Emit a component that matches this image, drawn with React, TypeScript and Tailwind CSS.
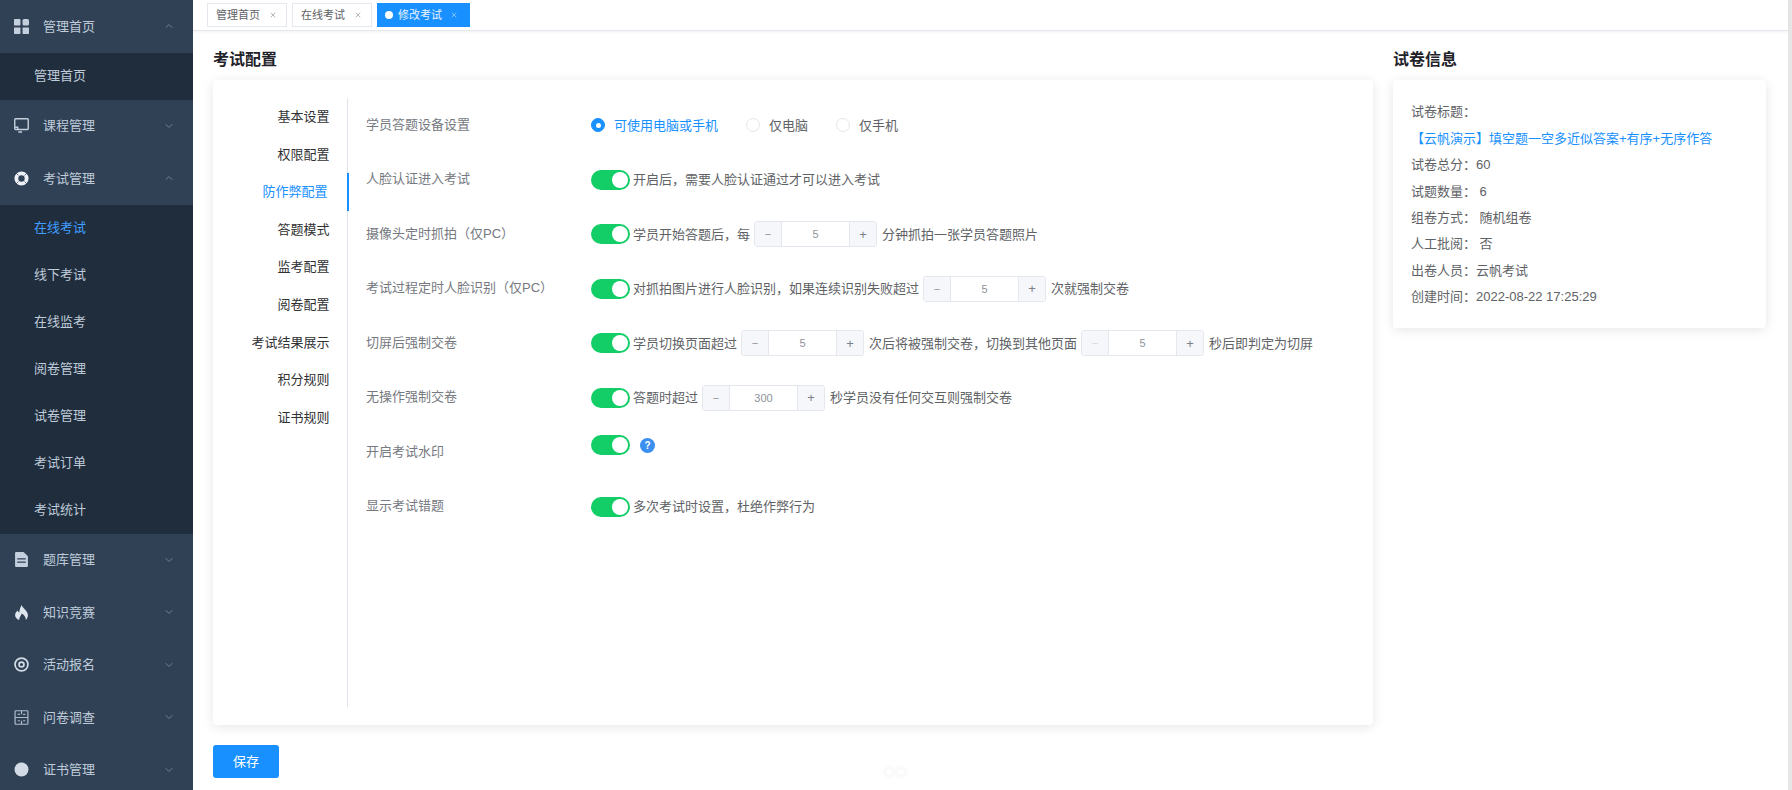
import { ChevronDown, ChevronUp, X } from "lucide-react";
import type { ReactNode } from "react";

const fontStack = "font-['Liberation_Sans','Noto_Sans_CJK_SC',sans-serif]";

function GridIcon() {
  return (
    <svg viewBox="0 0 14 14" className="h-[15px] w-[15px] fill-[#c3cfdc]">
      <rect x="0" y="0" width="6" height="6" rx="0.6" />
      <rect x="8" y="0" width="6" height="6" rx="1.4" />
      <rect x="0" y="8" width="6" height="6" rx="0.6" />
      <rect x="8" y="8" width="6" height="6" rx="0.6" />
    </svg>
  );
}

function MonitorIcon() {
  return (
    <svg viewBox="0 0 14 14" fill="none" className="h-[15px] w-[15px] stroke-[#c3cfdc]" strokeWidth="1.3">
      <rect x="0.7" y="0.7" width="12.6" height="10" rx="0.8" />
      <path d="M1 8.600h2.500v2M4 13h3.500" />
    </svg>
  );
}

function RingIcon() {
  return (
    <svg viewBox="0 0 14 14" fill="none" className="h-[15px] w-[15px] stroke-[#eef2f6]">
      <circle cx="7" cy="7" r="4.800" strokeWidth="3.600" />
      <path d="M2 2l2.200 2.200M12 2L9.800 4.200M2 12l2.200-2.200M12 12L9.800 9.800" stroke="#304156" strokeWidth="0.700" />
    </svg>
  );
}

function FileIcon() {
  return (
    <svg viewBox="0 0 14 14" className="h-[15px] w-[15px] fill-[#c3cfdc]">
      <path d="M1 1.200C1 .5 1.500 0 2.200 0H9l4 4v8.800c0 .7-.5 1.200-1.200 1.200H2.200C1.500 14 1 13.500 1 12.800z" />
      <path d="M3 6.500h8M3 9.500h8" stroke="#304156" strokeWidth="1.200" />
    </svg>
  );
}

function FlameIcon() {
  return (
    <svg viewBox="0 0 14 14" className="h-[15px] w-[15px] fill-[#dfe6ee]">
      <path d="M7.300 0c.5 2 1.600 2.800 2.700 3.900C11.500 5.300 13 7.300 13 9.600c0 1.700-.8 3.200-2 4.400.3-2.300-1.300-4.500-3.800-6C6.900 9.700 5 10.900 4.800 14 2.600 13.200 1 11.600 1 9.400c0-2 1.200-3.200 2.500-4.300.4 1 .8 1.500 1.500 1.900C5.200 4.400 5.800 2 7.300 0z" />
    </svg>
  );
}

function TargetIcon() {
  return (
    <svg viewBox="0 0 14 14" fill="none" className="h-[15px] w-[15px] stroke-[#d3dce6]">
      <circle cx="7" cy="7" r="6" strokeWidth="1.600" />
      <circle cx="7" cy="7" r="2.300" strokeWidth="1.600" />
    </svg>
  );
}

function FormIcon() {
  return (
    <svg viewBox="0 0 14 14" fill="none" className="h-[15px] w-[15px] stroke-[#aebccb]" strokeWidth="1.100">
      <rect x="1" y="0.700" width="12" height="12.600" rx="0.800" />
      <path d="M1 7h12M7 0.700V4M7 10v3.300M3.500 4h2M8.500 4h2M3.500 10h2M8.500 10h2" />
    </svg>
  );
}

function DotIcon() {
  return (
    <svg viewBox="0 0 14 14" className="h-[15px] w-[15px] fill-[#d3dce6]">
      <circle cx="7" cy="7" r="6.500" />
    </svg>
  );
}

const groups: { title: string; icon: ReactNode; open?: boolean; children?: string[] }[] = [
  { title: "管理首页", icon: <GridIcon />, open: true, children: ["管理首页"] },
  { title: "课程管理", icon: <MonitorIcon /> },
  {
    title: "考试管理",
    icon: <RingIcon />,
    open: true,
    children: ["在线考试", "线下考试", "在线监考", "阅卷管理", "试卷管理", "考试订单", "考试统计"],
  },
  { title: "题库管理", icon: <FileIcon /> },
  { title: "知识竞赛", icon: <FlameIcon /> },
  { title: "活动报名", icon: <TargetIcon /> },
  { title: "问卷调查", icon: <FormIcon /> },
  { title: "证书管理", icon: <DotIcon /> },
];

function Sidebar() {
  return (
    <aside className="h-full w-[193px] shrink-0 overflow-hidden bg-[#304156] text-[13px] text-[#bfcbd9]">
      {groups.map((g) => (
        <div key={g.title}>
          <div className="flex h-[52.5px] items-center pl-[14px] pr-[18px]">
            <span className="flex w-[29px] items-center">{g.icon}</span>
            <span className="flex-1">{g.title}</span>
            {g.open ? (
              <ChevronUp className="h-3 w-3 text-[#6f8196]" />
            ) : (
              <ChevronDown className="h-3 w-3 text-[#6f8196]" />
            )}
          </div>
          {g.children?.map((c) => (
            <div
              key={c}
              className={`flex h-[47px] items-center bg-[#1f2d3d] pl-[34px] ${c === "在线考试" ? "text-[#409eff]" : ""}`}
            >
              {c}
            </div>
          ))}
        </div>
      ))}
    </aside>
  );
}

function TabsBar() {
  return (
    <div className="flex h-[31px] shrink-0 items-start gap-[5px] border-b border-[#e4e7ed] pl-[14px] pt-[3px] text-[11px] shadow-[0_1px_3px_rgba(0,0,0,0.06)]">
      {["管理首页", "在线考试"].map((t) => (
        <div key={t} className="flex h-[24px] w-[80px] items-center border border-[#e4e7ed] pl-[8px] text-[#606266]">
          {t}
          <X className="ml-[9px] h-[8px] w-[8px] text-[#909399]" />
        </div>
      ))}
      <div className="flex h-[24px] w-[93px] items-center bg-[#1890ff] pl-[8px] text-[#e8f3ff]">
        <span className="mr-[5px] h-[8px] w-[8px] rounded-full bg-white" />
        修改考试
        <X className="ml-[8px] h-[8px] w-[8px] text-[#b5d9ff]" />
      </div>
    </div>
  );
}

const navItems = ["基本设置", "权限配置", "防作弊配置", "答题模式", "监考配置", "阅卷配置", "考试结果展示", "积分规则", "证书规则"];

function SideNav() {
  return (
    <div className="w-[135px] shrink-0 border-r-[1.5px] border-[#dfe4ec]">
      {navItems.map((n) => (
        <div
          key={n}
          className={`-mr-[1.5px] flex h-[37.6px] items-center justify-end pr-[19px] ${
            n === "防作弊配置" ? "border-r-2 border-[#1890ff] text-[#1890ff]" : "text-[#303133]"
          }`}
        >
          {n}
        </div>
      ))}
    </div>
  );
}

function Switch() {
  return (
    <span className="flex h-[20px] w-[39px] shrink-0 items-center justify-end rounded-full bg-[#13ce66] pr-[2px]">
      <span className="h-[16px] w-[16px] rounded-full bg-white" />
    </span>
  );
}

function Stepper({ value, faint }: { value: string; faint?: boolean }) {
  return (
    <span className="ml-[4px] mr-[5px] flex h-[26px] w-[123px] shrink-0 overflow-hidden rounded-[3px] border border-[#e4e7ed] text-[11px]">
      <span className={`flex w-[27px] items-center justify-center border-r border-[#e4e7ed] bg-[#f5f7fa] ${faint ? "text-[#d5d8de]" : "text-[#909399]"}`}>
        −
      </span>
      <span className="flex flex-1 items-center justify-center text-[#8f9298]">{value}</span>
      <span className="flex w-[27px] items-center justify-center border-l border-[#e4e7ed] bg-[#f5f7fa] text-[13px] text-[#7d8088]">
        +
      </span>
    </span>
  );
}

function Row({ label, children }: { label: string; children: ReactNode }) {
  return (
    <div className="flex h-[54.5px] items-center">
      <span className="w-[225px] shrink-0 pb-[2px] text-[#76797f]">{label}</span>
      {children}
    </div>
  );
}

function Hint({ children }: { children: ReactNode }) {
  return <span className="flex items-center whitespace-nowrap pl-[3px] text-[#606266]">{children}</span>;
}

function Radio({ label, checked }: { label: string; checked?: boolean }) {
  return (
    <span className={`mr-[28px] flex items-center gap-[9px] ${checked ? "text-[#1890ff]" : "text-[#606266]"}`}>
      <span
        className={`flex h-[14px] w-[14px] items-center justify-center rounded-full border ${
          checked ? "border-[#1890ff] bg-[#1890ff]" : "border-[#e4e7ed] bg-white"
        }`}
      >
        {checked && <span className="h-[5px] w-[5px] rounded-full bg-white" />}
      </span>
      {label}
    </span>
  );
}

function AntiCheatForm() {
  return (
    <div className="flex-1 pl-[18px]">
      <Row label="学员答题设备设置">
        <Radio label="可使用电脑或手机" checked />
        <Radio label="仅电脑" />
        <Radio label="仅手机" />
      </Row>
      <Row label="人脸认证进入考试">
        <Switch />
        <Hint>开启后，需要人脸认证通过才可以进入考试</Hint>
      </Row>
      <Row label="摄像头定时抓拍（仅PC）">
        <Switch />
        <Hint>
          学员开始答题后，每
          <Stepper value="5" />
          分钟抓拍一张学员答题照片
        </Hint>
      </Row>
      <Row label="考试过程定时人脸识别（仅PC）">
        <Switch />
        <Hint>
          对抓拍图片进行人脸识别，如果连续识别失败超过
          <Stepper value="5" />
          次就强制交卷
        </Hint>
      </Row>
      <Row label="切屏后强制交卷">
        <Switch />
        <Hint>
          学员切换页面超过
          <Stepper value="5" />
          次后将被强制交卷，切换到其他页面
          <Stepper value="5" faint />
          秒后即判定为切屏
        </Hint>
      </Row>
      <Row label="无操作强制交卷">
        <Switch />
        <Hint>
          答题时超过
          <Stepper value="300" />
          秒学员没有任何交互则强制交卷
        </Hint>
      </Row>
      <Row label="开启考试水印">
        <span className="-mt-[14px] flex items-center gap-[10px]">
          <Switch />
          <span className="flex h-[15px] w-[15px] items-center justify-center rounded-full bg-[#3a8ff0] text-[10px] font-bold text-white">
            ?
          </span>
        </span>
      </Row>
      <Row label="显示考试错题">
        <Switch />
        <Hint>多次考试时设置，杜绝作弊行为</Hint>
      </Row>
    </div>
  );
}

const paperInfo = [
  "试卷总分：60",
  "试题数量： 6",
  "组卷方式： 随机组卷",
  "人工批阅： 否",
  "出卷人员：云帆考试",
  "创建时间：2022-08-22 17:25:29",
];

function PaperInfo() {
  return (
    <div className="w-[373px]">
      <h2 className="flex h-[49px] items-center pt-[9px] text-[16px] font-bold text-[#1f2329]">试卷信息</h2>
      <div className="h-[248px] rounded-[4px] pl-[18px] pt-[19px] text-[#606266] shadow-[0_2px_12px_rgba(0,0,0,0.1)]">
        <div className="flex h-[26.4px] items-center">试卷标题：</div>
        <div className="flex h-[26.4px] items-center text-[#1890ff]">【云帆演示】填空题一空多近似答案+有序+无序作答</div>
        {paperInfo.map((p) => (
          <div key={p} className="flex h-[26.4px] items-center whitespace-pre">
            {p}
          </div>
        ))}
      </div>
    </div>
  );
}

export default function App() {
  return (
    <div className={`relative flex h-screen w-full overflow-hidden bg-white text-[13px] ${fontStack}`}>
      <Sidebar />
      <main className="flex min-w-0 flex-1 flex-col border-r-[4px] border-[#e6e6e6]">
        <TabsBar />
        <div className="flex gap-[20px] pl-[20px]">
          <div className="w-[1160px]">
            <h2 className="flex h-[49px] items-center pt-[9px] text-[16px] font-bold text-[#1f2329]">考试配置</h2>
            <div className="h-[645px] rounded-[4px] pt-[18px] shadow-[0_2px_12px_rgba(0,0,0,0.1)]">
              <div className="flex h-[609px]">
                <SideNav />
                <AntiCheatForm />
              </div>
            </div>
            <button className="mt-[20px] h-[33px] w-[66px] rounded-[3px] bg-[#1890ff] text-white">保存</button>
          </div>
          <PaperInfo />
        </div>
      </main>
      <div className="absolute bottom-[15px] left-[886px] flex gap-[6px]">
        <span className="h-[6px] w-[6px] rounded-full bg-white shadow-[0_0_6px_rgba(0,0,0,0.12)]" />
        <span className="h-[6px] w-[6px] rounded-full bg-white shadow-[0_0_6px_rgba(0,0,0,0.12)]" />
      </div>
    </div>
  );
}
